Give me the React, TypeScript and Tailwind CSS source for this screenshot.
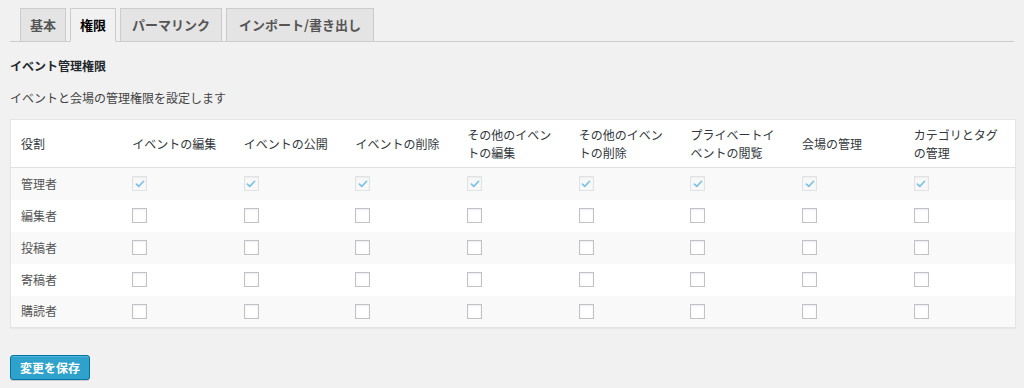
import React from 'react';

const tabs = ['基本', '権限', 'パーマリンク', 'インポート/書き出し'];
const tabPad = ['px-[9px]', 'px-[9px]', 'px-[11px]', 'px-[12px]'];

const columns: React.ReactNode[] = [
  '役割',
  'イベントの編集',
  'イベントの公開',
  'イベントの削除',
  <>その他のイベン<br />トの編集</>,
  <>その他のイベン<br />トの削除</>,
  <>プライベートイ<br />ベントの閲覧</>,
  '会場の管理',
  <>カテゴリとタグ<br />の管理</>,
];

const roles = [
  { name: '管理者', checked: true },
  { name: '編集者', checked: false },
  { name: '投稿者', checked: false },
  { name: '寄稿者', checked: false },
  { name: '購読者', checked: false },
];

const Checkbox = ({ checked }: { checked: boolean }) =>
  checked ? (
    <span className="flex h-[15px] w-[15px] items-center justify-center border border-[#e0e2e4] bg-[#f8f8f8] shadow-[inset_0_1px_2px_rgba(0,0,0,0.05)]">
      <svg viewBox="0 0 16 16" className="h-[12px] w-[12px]">
        <path d="M3.2 8.2 L6.4 11.2 L12.8 4.4" fill="none" stroke="#7ec1e0" strokeWidth={2.2} strokeLinecap="round" strokeLinejoin="round" />
      </svg>
    </span>
  ) : (
    <span className="block h-[15px] w-[15px] border border-[#bfc3c7] bg-white shadow-[inset_0_1px_2px_rgba(0,0,0,0.08)]" />
  );

export default function App() {
  return (
    <div className="min-h-screen bg-[#f1f1f1] font-['Noto_Sans_CJK_JP','Liberation_Sans',sans-serif] text-[12px] text-[#444]">
      {/* タブ */}
      <div className="mx-[10px] flex gap-[4px] border-b border-[#ccc] pl-[10px] pt-[8px]">
        {tabs.map((t, i) => (
          <div
            key={t}
            className={`-mb-px flex h-[34px] items-center border text-[13px] font-bold ${tabPad[i]} ${
              i === 1
                ? 'border-[#ccc] border-b-[#f1f1f1] bg-[#f1f1f1] text-[#000]'
                : 'border-[#ccc] bg-[#e4e4e4] text-[#555]'
            }`}
          >
            {t}
          </div>
        ))}
      </div>

      <div className="px-[10px]">
        <h3 className="mt-[16px] text-[12px] font-bold leading-[16px] text-[#23282d]">イベント管理権限</h3>
        <p className="mt-[16px] leading-[16px] text-[#444]">イベントと会場の管理権限を設定します</p>

        <table className="mt-[13px] w-[1006px] table-fixed border-collapse border border-[#e5e5e5] bg-white shadow-[0_1px_1px_rgba(0,0,0,0.04)]">
          <thead>
            <tr className="h-[48px] border-b border-[#e1e1e1]">
              {columns.map((c, i) => (
                <th key={i} className="px-[10px] text-left align-middle text-[12px] font-normal leading-[18px] text-[#32373c]">
                  {c}
                </th>
              ))}
            </tr>
          </thead>
          <tbody>
            {roles.map((r, ri) => (
              <tr key={r.name} className={`h-[32px] ${ri % 2 === 0 ? 'bg-[#f9f9f9]' : 'bg-white'}`}>
                <td className="px-[10px] align-middle text-[#555]">{r.name}</td>
                {Array.from({ length: 8 }).map((_, ci) => (
                  <td key={ci} className="px-[10px] align-middle">
                    <Checkbox checked={r.checked} />
                  </td>
                ))}
              </tr>
            ))}
          </tbody>
        </table>

        <button className="mt-[27px] h-[25px] rounded-[3px] border border-[#0074a2] bg-[#2ea2cc] px-[9px] text-[12px] font-bold text-white shadow-[inset_0_1px_0_rgba(120,200,230,0.5),0_1px_0_rgba(0,0,0,0.15)]">
          変更を保存
        </button>
      </div>
    </div>
  );
}
